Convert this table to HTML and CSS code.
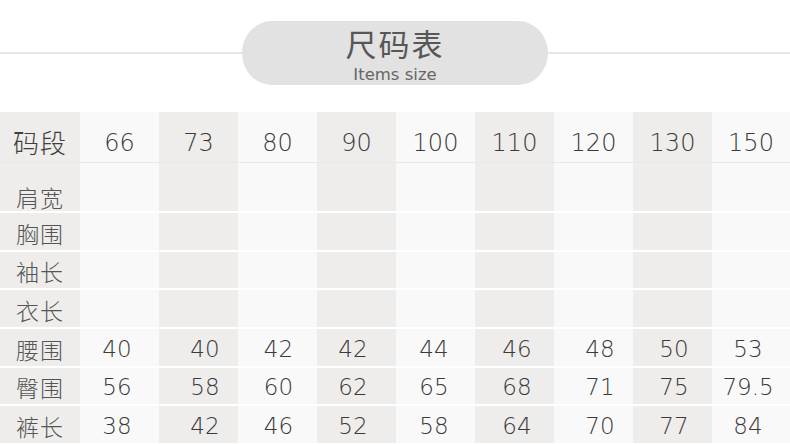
FILE: index.html
```html
<!DOCTYPE html>
<html lang="zh">
<head>
<meta charset="utf-8">
<title>尺码表</title>
<link rel="stylesheet" href="styles.css">
</head>
<body>
<div class="page">
  <header class="title-bar">
    <span class="rule"></span>
    <div class="pill">
      <div class="pill-cn">尺码表</div>
      <div class="pill-en">Items size</div>
    </div>
    <span class="rule"></span>
  </header>

  <div class="table">
    <div class="row head">
      <div class="cell label big">码段</div>
      <div class="cell">66</div><div class="cell">73</div><div class="cell">80</div><div class="cell">90</div>
      <div class="cell">100</div><div class="cell">110</div><div class="cell">120</div><div class="cell">130</div><div class="cell">150</div>
    </div>
    <div class="body">
      <div class="row tall">
        <div class="cell label">肩宽</div>
        <div class="cell"></div><div class="cell"></div><div class="cell"></div><div class="cell"></div>
        <div class="cell"></div><div class="cell"></div><div class="cell"></div><div class="cell"></div><div class="cell"></div>
      </div>
      <div class="row">
        <div class="cell label">胸围</div>
        <div class="cell"></div><div class="cell"></div><div class="cell"></div><div class="cell"></div>
        <div class="cell"></div><div class="cell"></div><div class="cell"></div><div class="cell"></div><div class="cell"></div>
      </div>
      <div class="row">
        <div class="cell label">袖长</div>
        <div class="cell"></div><div class="cell"></div><div class="cell"></div><div class="cell"></div>
        <div class="cell"></div><div class="cell"></div><div class="cell"></div><div class="cell"></div><div class="cell"></div>
      </div>
      <div class="row">
        <div class="cell label">衣长</div>
        <div class="cell"></div><div class="cell"></div><div class="cell"></div><div class="cell"></div>
        <div class="cell"></div><div class="cell"></div><div class="cell"></div><div class="cell"></div><div class="cell"></div>
      </div>
      <div class="row data">
        <div class="cell label">腰围</div>
        <div class="cell">40</div><div class="cell">40</div><div class="cell">42</div><div class="cell">42</div>
        <div class="cell">44</div><div class="cell">46</div><div class="cell">48</div><div class="cell">50</div><div class="cell">53</div>
      </div>
      <div class="row data">
        <div class="cell label">臀围</div>
        <div class="cell">56</div><div class="cell">58</div><div class="cell">60</div><div class="cell">62</div>
        <div class="cell">65</div><div class="cell">68</div><div class="cell">71</div><div class="cell">75</div><div class="cell">79.5</div>
      </div>
      <div class="row data">
        <div class="cell label">裤长</div>
        <div class="cell">38</div><div class="cell">42</div><div class="cell">46</div><div class="cell">52</div>
        <div class="cell">58</div><div class="cell">64</div><div class="cell">70</div><div class="cell">77</div><div class="cell">84</div>
      </div>
    </div>
  </div>
</div>
</body>
</html>
```

FILE: styles.css
```css
* { box-sizing: border-box; }

html, body {
  margin: 0;
  padding: 0;
  background: #ffffff;
}

.page {
  width: 790px;
  height: 444px;
  overflow: hidden;
  font-family: "DejaVu Sans", "Noto Sans CJK SC", sans-serif;
}

/* ---------- title ---------- */
.title-bar {
  height: 112px;
  padding-top: 21px;
  display: flex;
  align-items: flex-start;
}

.rule {
  flex: 1;
  height: 2px;
  margin-top: 31px;
  background: #e6e6e6;
}

.pill {
  width: 306px;
  height: 64px;
  background: #e2e2e2;
  border-radius: 30px / 32px;
  display: flex;
  flex-direction: column;
  align-items: center;
}

.pill-cn {
  font-family: "Noto Sans CJK SC", sans-serif;
  font-size: 31px;
  line-height: normal;
  color: #575757;
  letter-spacing: 2px;
  margin-top: -1px;
}

.pill-en {
  font-family: "DejaVu Sans", sans-serif;
  font-size: 16.5px;
  line-height: normal;
  color: #666666;
}

/* ---------- table ---------- */
.table {
  display: flex;
  flex-direction: column;
}

.body {
  display: flex;
  flex-direction: column;
  gap: 2px;
}

.row {
  display: grid;
  grid-template-columns: 80px repeat(8, 79px) 78px;
  grid-template-rows: 100%;
  height: 36.67px;
}

.row.head {
  height: 51px;
  border-bottom: 1px solid #e8e8e8;
}

.row.tall {
  height: 48px;
}

.cell {
  display: flex;
  align-items: center;
  justify-content: center;
  min-height: 0;
  line-height: 1.15;
  font-size: 23px;
  font-weight: 300;
  color: #3a3a3a;
  background: #f9f9f9;
  padding-top: 3px;
}

.cell:nth-child(odd) {
  background: #eeedeb;
}

.head .cell {
  font-size: 24px;
  padding-top: 13px;
}

.label {
  font-family: "Noto Sans CJK SC", sans-serif;
  font-size: 23px;
  font-weight: 300;
  color: #555555;
  letter-spacing: 1px;
}

.head .label.big {
  font-size: 26px;
  font-weight: 300;
  padding-top: 10px;
  color: #3e3e3e;
}

.tall .cell {
  padding-top: 20px;
}

/* slight horizontal shifts of the data figures */
.data .cell:nth-child(2)  { padding-right: 5px; }
.data .cell:nth-child(3)  { padding-left: 13px; }
.data .cell:nth-child(4)  { padding-left: 2px; }
.data .cell:nth-child(5)  { padding-right: 7px; }
.data .cell:nth-child(6)  { padding-right: 3px; }
.data .cell:nth-child(7)  { padding-left: 5px; }
.data .cell:nth-child(8)  { padding-left: 13px; }
.data .cell:nth-child(9)  { padding-left: 3px; }
.data .cell:nth-child(10) { padding-right: 6px; }
```
